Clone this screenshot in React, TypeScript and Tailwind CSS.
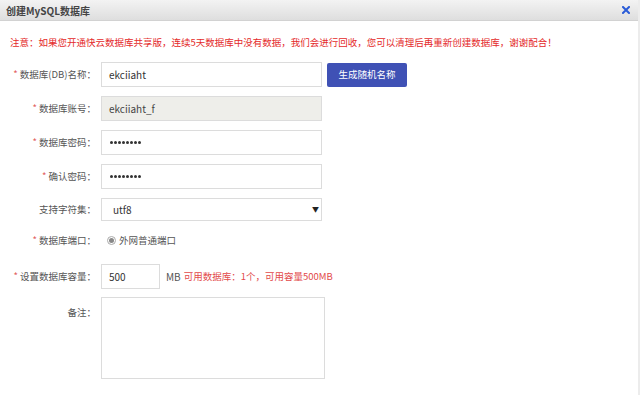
import React from 'react';

const font = { fontFamily: '"Microsoft YaHei", "Noto Sans CJK SC", "Noto Sans", sans-serif' };

const Label: React.FC<{ text: string; required?: boolean }> = ({ text, required }) => (
  <div className="w-[97px] shrink-0 text-right text-[9.5px] text-[#555] pr-[1px]">
    {required && <span className="text-[#e25b5b] mr-[2px]">*</span>}
    {text}：
  </div>
);

const Dots = () => (
  <div className="flex gap-[1px]">
    {Array.from({ length: 8 }).map((_, i) => (
      <span key={i} className="w-[3px] h-[3px] rounded-full bg-[#333]" />
    ))}
  </div>
);

export default function App() {
  return (
    <div className="w-[640px] h-[395px] bg-white overflow-hidden flex flex-col border-r-[2px] border-[#ececec]" style={font}>
      {/* 标题栏 */}
      <div className="h-[21px] shrink-0 flex items-center justify-between px-[6px] bg-gradient-to-b from-[#f3f3f3] to-[#dedede] border-b border-[#d2d2d2]">
        <span className="text-[10px] font-bold text-[#444]">创建MySQL数据库</span>
        <svg width="8" height="8" viewBox="0 0 8 8" className="mr-[2px]">
          <path d="M1 1 L7 7 M7 1 L1 7" stroke="#2a5bd7" strokeWidth="2" strokeLinecap="square" />
        </svg>
      </div>

      {/* 提示 */}
      <div className="pl-[10px] pt-[15px] text-[9.5px] text-[#e42a2a] leading-[12px]">
        注意：如果您开通快云数据库共享版，连续5天数据库中没有数据，我们会进行回收，您可以清理后再重新创建数据库，谢谢配合！
      </div>

      <div className="flex flex-col pt-[14px]">
        {/* 名称 */}
        <div className="flex items-center h-[25px]">
          <Label text="数据库(DB)名称" required />
          <div className="ml-[4px] w-[221px] h-[25px] border border-[#dcdcdc] flex items-center px-[7px] text-[10px] text-[#333]">ekciiaht</div>
          <button className="ml-[5px] w-[80px] h-[24px] bg-[#3f51b5] text-white text-[9.5px] rounded-[2px]">生成随机名称</button>
        </div>

        {/* 账号 */}
        <div className="flex items-center h-[25px] mt-[9px]">
          <Label text="数据库账号" required />
          <div className="ml-[4px] w-[221px] h-[25px] border border-[#dcdcdc] bg-[#eeeeea] flex items-center px-[7px] text-[10px] text-[#444]">ekciiaht_f</div>
        </div>

        {/* 密码 */}
        <div className="flex items-center h-[25px] mt-[9px]">
          <Label text="数据库密码" required />
          <div className="ml-[4px] w-[221px] h-[25px] border border-[#dcdcdc] flex items-center px-[8px]">
            <Dots />
          </div>
        </div>

        {/* 确认密码 */}
        <div className="flex items-center h-[25px] mt-[9px]">
          <Label text="确认密码" required />
          <div className="ml-[4px] w-[221px] h-[25px] border border-[#dcdcdc] flex items-center px-[8px]">
            <Dots />
          </div>
        </div>

        {/* 字符集 */}
        <div className="flex items-center h-[24px] mt-[8px]">
          <Label text="支持字符集" />
          <div className="ml-[4px] w-[221px] h-[23px] border border-[#dcdcdc] flex items-center justify-between pl-[11px] pr-[2px] text-[10px] text-[#333]">
            <span>utf8</span>
            <span className="text-[7px] text-[#222]">▼</span>
          </div>
        </div>

        {/* 端口 */}
        <div className="flex items-center h-[20px] mt-[9px]">
          <Label text="数据库端口" required />
          <div className="ml-[10px] flex items-center text-[9.5px] text-[#555]">
            <span className="w-[9px] h-[9px] rounded-full border border-[#aaa] flex items-center justify-center mr-[3px]">
              <span className="w-[5px] h-[5px] rounded-full bg-[#888]" />
            </span>
            外网普通端口
          </div>
        </div>

        {/* 容量 */}
        <div className="flex items-center h-[25px] mt-[14px]">
          <Label text="设置数据库容量" required />
          <div className="ml-[4px] w-[59px] h-[25px] border border-[#dcdcdc] flex items-center px-[7px] text-[10px] text-[#333]">500</div>
          <span className="ml-[6px] text-[10px] text-[#555]">MB</span>
          <span className="ml-[3px] text-[9.5px] text-[#e24a4a]">可用数据库：1个，可用容量500MB</span>
        </div>

        {/* 备注 */}
        <div className="flex items-start mt-[8px]">
          <div className="pt-[8px]"><Label text="备注" /></div>
          <div className="ml-[4px] w-[224px] h-[82px] border border-[#dcdcdc]" />
        </div>
      </div>
    </div>
  );
}
